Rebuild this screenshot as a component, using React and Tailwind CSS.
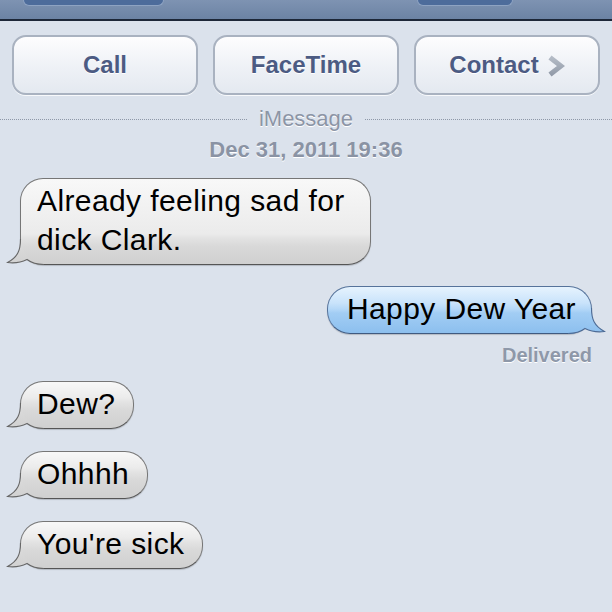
import clsx from 'clsx'

// cola del bocadillo, dibujada hacia la izquierda; la azul se voltea
function Cola({ azul }) {
  const id = azul ? 'colaAzul' : 'colaGris'
  return (
    <svg
      width="40"
      height="30"
      viewBox="0 0 40 30"
      className={clsx('absolute bottom-[-1px]', azul ? 'right-[-15px] -scale-x-100' : 'left-[-15px]')}
    >
      <defs>
        <linearGradient id={id} x1="0" y1="0" x2="0" y2="30" gradientUnits="userSpaceOnUse">
          {azul ? (
            <>
              <stop offset="0" stopColor="#c9e3fb" />
              <stop offset="0.2" stopColor="#b5d8f8" />
              <stop offset="0.333" stopColor="#a2cdf4" />
              <stop offset="1" stopColor="#8cbfee" />
            </>
          ) : (
            <>
              <stop offset="0" stopColor="#ebebeb" />
              <stop offset="0.133" stopColor="#e3e3e3" />
              <stop offset="0.4" stopColor="#d9d9d9" />
              <stop offset="1" stopColor="#d0d0d0" />
            </>
          )}
        </linearGradient>
      </defs>
      <path
        d="M14.5,4 C14.5,15 12,22 1.5,27.5 C9,28.5 16,27 21,24.5 C25,27.5 30,29.5 38,29.5 L38,28 L37,28 A21,21 0 0 1 16,7 L15,4 Z"
        fill={`url(#${id})`}
      />
      <path
        d="M14.5,4 C14.5,15 12,22 1.5,27.5 C9,28.5 16,27 21,24.5 C25,27.5 30,29.5 38,29.5"
        fill="none"
        stroke={azul ? '#4d6b95' : '#666'}
        strokeWidth="1.1"
      />
    </svg>
  )
}

function Burbuja({ children, azul, className }) {
  return (
    <div
      className={clsx(
        'relative rounded-[23px] border pt-[2px] pb-[5px] text-[30px] leading-[39px] tracking-[0.4px] text-black',
        azul
          ? 'self-end mr-[20px] pl-[19px] pr-[15px] border-[#56739b] border-b-[#3f5a80] bg-[linear-gradient(to_top,#8cbfee_0px,#a2cdf4_20px,#b5d8f8_24px,#c9e3fb_30px,#e6f3fe_100%)]'
          : 'self-start ml-[20px] pl-[16px] pr-[18px] border-[#767676] border-b-[#555] bg-[linear-gradient(to_top,#d0d0d0_0px,#d9d9d9_18px,#e3e3e3_26px,#ebebeb_30px,#f8f8f8_100%)]',
        'shadow-[0_1px_1px_rgba(0,0,0,0.18)]',
        className
      )}
    >
      <span className="relative z-10">{children}</span>
      <Cola azul={azul} />
    </div>
  )
}

function Boton({ children }) {
  return (
    <div className="flex-1 h-[60px] flex items-center justify-center gap-[8px] rounded-[14px] border-2 border-[#a9b2c0] bg-[linear-gradient(to_bottom,#fdfdfe,#eef1f6_55%,#e4e9f0)] shadow-[0_1px_0_rgba(255,255,255,0.8)] text-[24px] font-bold text-[#4c5b83] [text-shadow:0_1px_0_#fff]">
      {children}
    </div>
  )
}

export default function App() {
  return (
    <div className="w-[612px] h-[612px] overflow-hidden flex flex-col bg-[#dbe2ec] font-['Liberation_Sans',Arial,sans-serif]">
      {/* barra superior */}
      <div className="h-[21px] shrink-0 flex justify-between items-start border-b-2 border-[#1d2738] bg-[linear-gradient(to_bottom,#7e93b2,#6c83a4)]">
        <div className="ml-[23px] w-[141px] h-[6px] rounded-b-[7px] bg-[#4d6c9b] border border-t-0 border-[#8ea3c2]" />
        <div className="mr-[99px] w-[96px] h-[6px] rounded-b-[7px] bg-[#4d6c9b] border border-t-0 border-[#8ea3c2]" />
      </div>

      <div className="mt-[14px] px-3 flex gap-[15px]">
        <Boton>Call</Boton>
        <Boton>FaceTime</Boton>
        <Boton>
          Contact
          <svg width="18" height="22" viewBox="0 0 18 22" className="mt-[1px]">
            <defs>
              <linearGradient id="chev" x1="0" y1="0" x2="0" y2="22" gradientUnits="userSpaceOnUse">
                <stop offset="0" stopColor="#b9c0ca" />
                <stop offset="1" stopColor="#8e97a5" />
              </linearGradient>
            </defs>
            <path d="M3,2.5 L14,11 L3,19.5" fill="none" stroke="url(#chev)" strokeWidth="5" strokeLinejoin="miter" />
          </svg>
        </Boton>
      </div>

      <div className="mt-[11px] flex items-center gap-[12px] text-[22px] leading-[26px] text-[#8c95a6] [text-shadow:0_1px_0_#fff]">
        <div className="flex-1 border-t border-dotted border-[#8e98a8]" />
        <span>iMessage</span>
        <div className="flex-1 border-t border-dotted border-[#8e98a8]" />
      </div>
      <div className="mt-[5px] text-center text-[22px] leading-[26px] font-bold text-[#8a93a4] [text-shadow:0_1px_0_#fff]">
        Dec 31, 2011 19:36
      </div>

      <div className="flex flex-col">
        <Burbuja className="mt-[15px] w-[351px]">
          Already feeling sad for
          <br />
          dick Clark.
        </Burbuja>
        <Burbuja azul className="mt-[21px]">Happy Dew Year</Burbuja>
        <div className="mt-[9px] self-end mr-[20px] text-[20px] leading-[24px] font-bold text-[#8e98a9] [text-shadow:0_1px_0_#fff]">
          Delivered
        </div>
        <Burbuja className="mt-[14px]">Dew?</Burbuja>
        <Burbuja className="mt-[22px]">Ohhhh</Burbuja>
        <Burbuja className="mt-[22px]">You're sick</Burbuja>
      </div>
    </div>
  )
}
